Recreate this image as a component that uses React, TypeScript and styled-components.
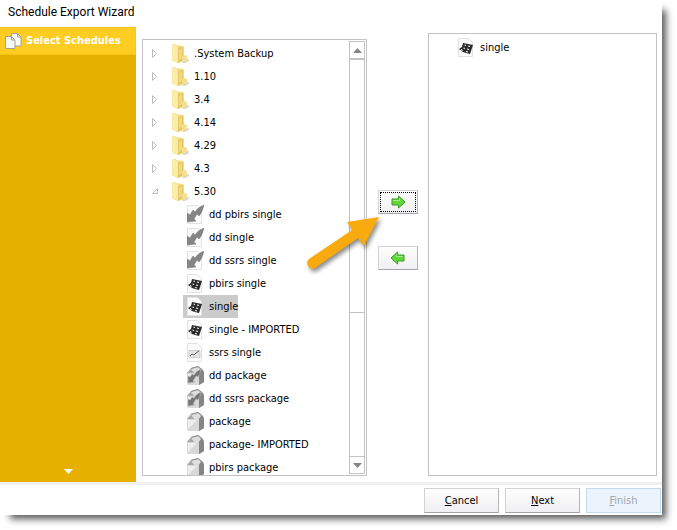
import React, { useState } from "react";
import styled, { createGlobalStyle, css } from "styled-components";

const GlobalStyle = createGlobalStyle`
  * { box-sizing: border-box; }
  body {
    margin: 0;
    background: #fff;
    color: #000;
    font: 11px/16px "DejaVu Sans Condensed", "Noto Sans", sans-serif;
    overflow: hidden;
  }
  button { font: inherit; color: inherit; padding: 0; }
`;

const Page = styled.div`
  height: 100vh;
  padding: 0 15px 15px 0;
`;

const Window = styled.main`
  position: relative;
  display: flex;
  flex-direction: column;
  height: 100%;
  background: #fff;
  box-shadow: 7px 7px 7px -3px rgba(0, 0, 0, 0.65);
`;

const TitleBar = styled.h1`
  flex: none;
  height: 27px;
  margin: 0;
  padding-left: 8px;
  font: 12px/24px Roboto, sans-serif;
`;

const Body = styled.div`
  flex: 1;
  display: flex;
  min-height: 0;
`;

const Sidebar = styled.nav`
  flex: none;
  display: flex;
  flex-direction: column;
  justify-content: space-between;
  align-items: center;
  width: 136px;
  padding-bottom: 8px;
  background: #e5b000;
`;

const Step = styled.a`
  display: flex;
  align-items: center;
  gap: 4px;
  width: 100%;
  height: 28px;
  padding-left: 5px;
  border: 1px solid #fac51a;
  border-left: 0;
  background: #ffcc22;
  color: #fff;
  font: bold 11px/16px "DejaVu Sans Condensed", sans-serif;
  text-decoration: none;
  white-space: nowrap;
`;

const Content = styled.div`
  flex: 1;
  display: flex;
  min-width: 0;
  padding: 6px 5px 6px 6px;
`;

const Panel = styled.section<{ $source?: boolean }>`
  flex: ${(p) => (p.$source ? "225 1 0" : "229 1 0")};
  display: flex;
  min-width: 0;
  margin-top: ${(p) => (p.$source ? "6px" : "0")};
  border: 1px solid #c3c3c3;
  overflow: hidden;
`;

const List = styled.ul<{ $indent?: number }>`
  flex: 1;
  min-width: 0;
  margin: 0;
  padding: 2px 0 0 ${(p) => p.$indent ?? 0}px;
  list-style: none;
`;

const Row = styled.li<{ $child?: boolean }>`
  display: flex;
  align-items: center;
  height: 23px;
  padding-left: ${(p) => (p.$child ? "40px" : "5px")};
`;

const Expander = styled.button`
  flex: none;
  display: grid;
  place-items: center;
  width: 14px;
  height: 14px;
  margin-right: 6px;
  border: 0;
  background: none;
`;

const Item = styled.button<{ $selected?: boolean }>`
  display: flex;
  align-items: center;
  gap: 5px;
  height: 23px;
  padding: 0 0 0 4px;
  border: 0;
  background: ${(p) => (p.$selected ? "#cbcbcb" : "none")};
  white-space: nowrap;
`;

const ScrollBar = styled.div`
  flex: none;
  display: flex;
  flex-direction: column;
  width: 16px;
  margin: 1px 1px 1px 0;
  border: 1px solid #c3c3c3;
`;

const ScrollButton = styled.button`
  flex: none;
  display: grid;
  place-items: center;
  height: 16px;
  border: 0;
  background: #fff;
`;

const ScrollTrack = styled.div`
  flex: 1;
  border: solid #c3c3c3;
  border-width: 1px 0;
`;

const ScrollThumb = styled.div`
  height: 64%;
  border: solid #c3c3c3;
  border-width: 1px 0;
`;

const Transfer = styled.div`
  flex: none;
  display: flex;
  flex-direction: column;
  align-items: center;
  gap: 32px;
  width: 61px;
  padding-top: 157px;
`;

const raised = css`
  border: 1px solid #d2d2d2;
  border-right-color: #b4b4b4;
  border-bottom-color: #a5a5a5;
  background: linear-gradient(#fefefe, #f0f0f2);
`;

const MoveButton = styled.button<{ $focused?: boolean }>`
  ${raised}
  display: grid;
  place-items: center;
  width: 40px;
  height: 24px;
  outline: ${(p) => (p.$focused ? "1px dotted #000" : "none")};
  outline-offset: -3px;
`;

const Footer = styled.footer`
  flex: none;
  display: flex;
  justify-content: flex-end;
  gap: 6px;
  height: 33px;
  padding: 3px 1px 0 0;
  border-top: 3px solid #f0f0f0;
`;

const FooterButton = styled.button`
  ${raised}
  width: 75px;
  height: 25px;
  &:disabled {
    border-color: #c6d8ec;
    background: #ebf4fc;
    color: #a3a7ab;
  }
`;

const Pointer = styled.svg`
  position: absolute;
  left: 298px;
  top: 208px;
  pointer-events: none;
  filter: drop-shadow(2px 3px 2px rgba(0, 0, 0, 0.45));
`;

type Kind = "folder" | "burst" | "report" | "chart" | "burstBox" | "box";

const Sheet = () => (
  <path d="M.5.5h10l4 4v14H.5z" fill="#fbfbfb" stroke="#e2e2e2" />
);

const BoxShape = () => (
  <>
    <path d="M0 7 4 2l7-2 5 4 1 3v9l-5 3H1z" fill="#b0b0b0" />
    <path d="m11 8 2-5 3 1 1 3v9l-5 3z" fill="#858585" />
    <path d="M0 7h12v12H1l-1-1z" fill="#d8d8d8" />
    <path d="M1 17V8h9z" fill="#eeeeee" />
    <path d="m0 7 4-4 4 4z" fill="#a8a8a8" />
    <path d="m4 3 7-2 3 3-3 4H8z" fill="#dedede" />
    <path d="m4 2.500 7-2 4 3" fill="none" stroke="#8c8c8c" />
  </>
);

const Icon = ({ kind }: { kind: Kind }) => {
  if (kind === "folder")
    return (
      <svg width="17" height="20" viewBox="0 0 17 20" aria-hidden="true">
        <path d="m10 19 3-3 4-1v2l-4 2z" fill="#d3d6d9" />
        <path d="m3 1 8 1 1 1v14l-6 2z" fill="#f3dc80" />
        <path d="m6 4 5-1v13l-5 3z" fill="#e6c660" />
        <path d="m7 6 3-2v10l-3 2z" fill="#f2d979" />
        <path d="m0 1 3-1 3 3v16l-6-3z" fill="#fcedaa" stroke="#efd67c" strokeWidth=".5" />
        <path d="m10 12 3-1 2 1v4l-3 2h-2z" fill="#f3df94" />
      </svg>
    );
  return (
    <svg width="17" height="19" viewBox="0 0 17 19" aria-hidden="true">
      {kind === "burst" && (
        <>
          <Sheet />
          <path d="M17 0Q11 2 8 7L6 5 3 10 0 8v9l9-1-2-2 3-5 2 2q3-3 5-11z" fill="#858585" stroke="#767676" strokeWidth=".5" />
        </>
      )}
      {kind === "report" && (
        <>
          <Sheet />
          <path d="m5 5 10 2-3 9-4-1-3-1-4-3 3-2z" fill="#2b2b2b" />
          <path d="m6.500 7 1.500.5m2 .5 2 .5M5.500 10l1.500.5m2 .5 2 .5M8 13.500l2 .5M3 11.500l1.500 1" fill="none" stroke="#f4f4f4" strokeWidth="1.200" />
        </>
      )}
      {kind === "chart" && (
        <>
          <Sheet />
          <path d="M2 7.500h11v7H2z" fill="#e4e4e4" stroke="#c0c0c0" strokeWidth=".7" />
          <path d="m3 13 2-2 2 1 2-2 3-2" fill="none" stroke="#666" />
        </>
      )}
      {kind === "box" && <BoxShape />}
      {kind === "burstBox" && (
        <>
          <BoxShape />
          <path d="M14 3Q9 5 7 9L5 8l-2 3-2-1v7l7-1-2-1 3-5 2 1q2-3 3-8z" fill="#747474" stroke="#bbb" strokeWidth=".5" />
        </>
      )}
    </svg>
  );
};

const Arrow = ({ left }: { left?: boolean }) => (
  <svg width="16" height="14" viewBox="0 0 16 14" aria-hidden="true">
    <path
      d={left ? "M7.500 1 1 7l6.500 6v-3H14V4H7.500z" : "M8.500 1 15 7l-6.500 6v-3H2V4h6.500z"}
      fill="#5fd838"
      stroke="#3b9a2b"
    />
    <path d={left ? "M6.500 3.500v2H13" : "M3 5.500h6.500v-2"} fill="none" stroke="#a2ee85" />
  </svg>
);

const folders = [".System Backup", "1.10", "3.4", "4.14", "4.29", "4.3", "5.30"];
const schedules: { kind: Kind; name: string }[] = [
  { kind: "burst", name: "dd pbirs single" },
  { kind: "burst", name: "dd single" },
  { kind: "burst", name: "dd ssrs single" },
  { kind: "report", name: "pbirs single" },
  { kind: "report", name: "single" },
  { kind: "report", name: "single - IMPORTED" },
  { kind: "chart", name: "ssrs single" },
  { kind: "burstBox", name: "dd package" },
  { kind: "burstBox", name: "dd ssrs package" },
  { kind: "box", name: "package" },
  { kind: "box", name: "package- IMPORTED" },
  { kind: "box", name: "pbirs package" },
];

export default function App() {
  const [selected, setSelected] = useState("single");
  return (
    <Page>
      <GlobalStyle />
      <Window>
        <TitleBar>Schedule Export Wizard</TitleBar>
        <Body>
          <Sidebar aria-label="Wizard steps">
            <Step href="#schedules">
              <svg width="17" height="16" viewBox="0 0 17 16" aria-hidden="true">
                <path d="M6.500.5h6l3.500 3.500v9H6.500z" fill="#fff" stroke="#a5a18a" />
                <path d="M12.500.5V4H16" fill="none" stroke="#a5a18a" />
                <path d="M.5 3.500h6L10 7v8.500H.5z" fill="#f5f7f9" stroke="#a5a18a" />
                <path d="M6.500 3.500V7H10" fill="none" stroke="#a5a18a" />
              </svg>
              Select Schedules
            </Step>
            <svg width="9" height="5" viewBox="0 0 9 5" aria-hidden="true">
              <path d="M0 0h9L4.500 5z" fill="#fff" />
            </svg>
          </Sidebar>
          <Content>
            <Panel $source aria-label="Available schedules">
              <List>
                {folders.map((name, i) => {
                  const open = i === folders.length - 1;
                  return (
                    <Row key={name}>
                      <Expander aria-label={`Toggle ${name}`} aria-expanded={open}>
                        <svg width="8" height="9" viewBox="0 0 8 9" aria-hidden="true">
                          <path d={open ? "M6.500 1.500v5h-5z" : "M1.500.5v8l4-4z"} fill="#fff" stroke="#bcbcbc" />
                        </svg>
                      </Expander>
                      <Item>
                        <Icon kind="folder" />
                        {name}
                      </Item>
                    </Row>
                  );
                })}
                {schedules.map(({ kind, name }) => (
                  <Row key={name} $child>
                    <Item $selected={name === selected} onClick={() => setSelected(name)}>
                      <Icon kind={kind} />
                      {name}
                    </Item>
                  </Row>
                ))}
              </List>
              <ScrollBar>
                <ScrollButton aria-label="Scroll up">
                  <svg width="9" height="5" viewBox="0 0 9 5" aria-hidden="true">
                    <path d="M0 5h9L4.500 0z" fill="#858585" />
                  </svg>
                </ScrollButton>
                <ScrollTrack>
                  <ScrollThumb />
                </ScrollTrack>
                <ScrollButton aria-label="Scroll down">
                  <svg width="9" height="5" viewBox="0 0 9 5" aria-hidden="true">
                    <path d="M0 0h9L4.500 5z" fill="#858585" />
                  </svg>
                </ScrollButton>
              </ScrollBar>
            </Panel>
            <Transfer>
              <MoveButton $focused aria-label="Add schedule">
                <Arrow />
              </MoveButton>
              <MoveButton aria-label="Remove schedule">
                <Arrow left />
              </MoveButton>
            </Transfer>
            <Panel aria-label="Schedules to export">
              <List $indent={20}>
                <Row>
                  <Item>
                    <Icon kind="report" />
                    single
                  </Item>
                </Row>
              </List>
            </Panel>
          </Content>
        </Body>
        <Footer>
          <FooterButton><u>C</u>ancel</FooterButton>
          <FooterButton><u>N</u>ext</FooterButton>
          <FooterButton disabled><u>F</u>inish</FooterButton>
        </Footer>
        <Pointer width="88" height="68" viewBox="0 0 88 68" aria-hidden="true">
          <path d="M81 9 66 38l-6-8-43 30q-4 2-7-2-2-5 1-7l43-29-5-8z" fill="#f9aa0e" />
        </Pointer>
      </Window>
    </Page>
  );
}
